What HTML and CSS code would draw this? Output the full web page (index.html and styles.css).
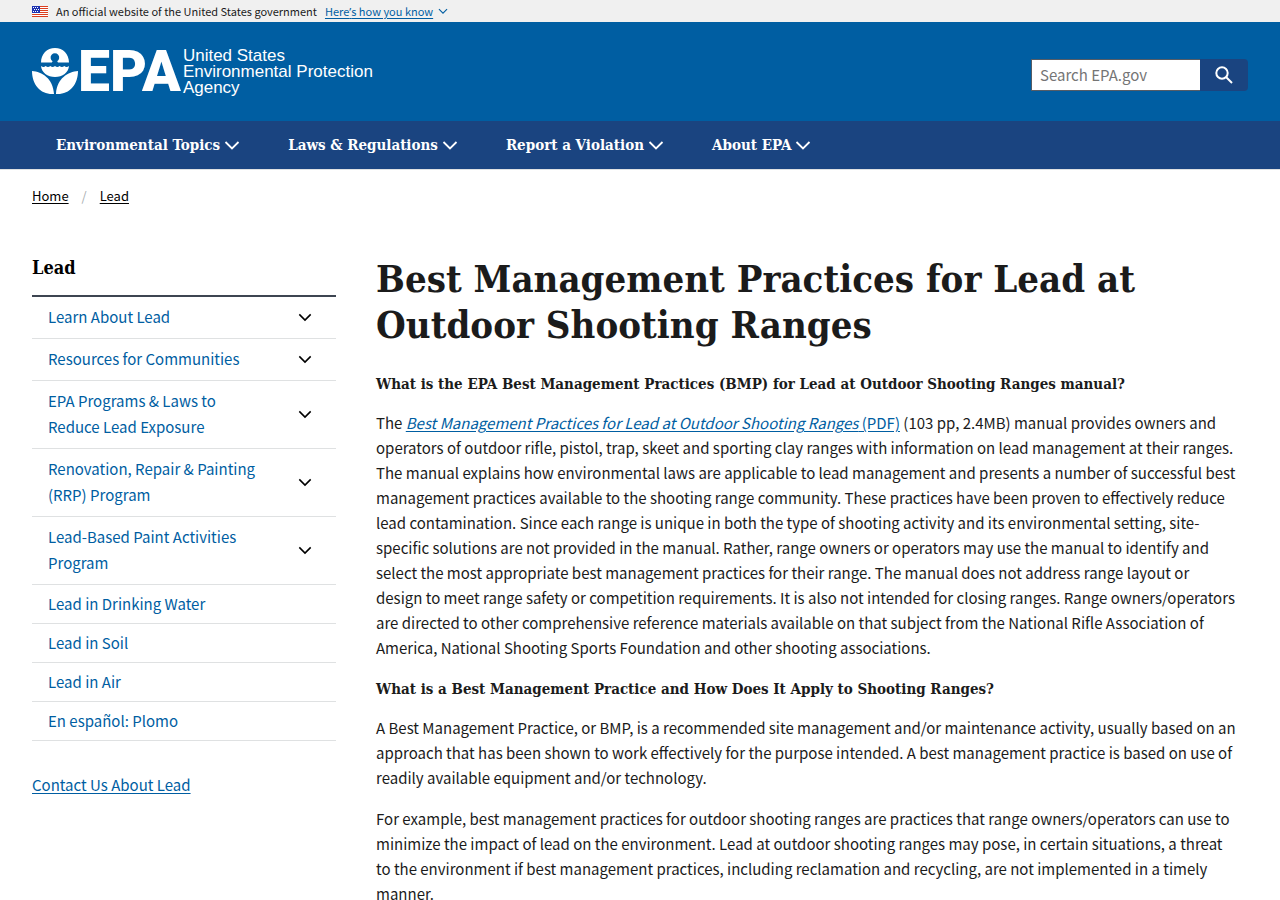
FILE: index.html
```html
<!DOCTYPE html>
<html lang="en">
<head>
<meta charset="utf-8">
<meta name="viewport" content="width=device-width, initial-scale=1">
<title>Best Management Practices for Lead at Outdoor Shooting Ranges | US EPA</title>
<link rel="stylesheet" href="styles.css">
</head>
<body>
<svg class="sprite" aria-hidden="true">
  <symbol id="chevron" viewBox="0 0 16 16"><path d="M1.500 5L8 11.500 14.500 5" fill="none" stroke="currentColor" stroke-width="1.800"/></symbol>
</svg>

<section class="banner" aria-label="Official government website">
  <svg class="flag" viewBox="0 0 16 11" aria-hidden="true">
    <path fill="#fff" d="M0 0h16v11H0z"/>
    <path stroke="#db3e1f" d="M0 .5h16M0 2.5h16M0 4.5h16M0 6.5h16M0 8.5h16M0 10.5h16"/>
    <path fill="#1e33b1" d="M0 0h8v7H0z"/>
    <path stroke="#fff" stroke-dasharray="1 1" d="M1 1.5h6M2 3.5h5M1 5.5h6"/>
  </svg>
  <span>An official website of the United States government</span>
  <button class="banner-button" type="button"><span class="banner-link">Here<span class="apostrophe">’</span>s how you know</span><svg class="icon-small" aria-hidden="true"><use href="#chevron"/></svg></button>
</section>

<header>
  <div class="masthead">
    <a class="logo" href="#" aria-label="United States Environmental Protection Agency">
      <svg class="flower" viewBox="0 0 46 47" aria-hidden="true">
        <path fill="#fff" fill-rule="evenodd" d="M9 14.5C9 6 15 0 23 0s14 6 14 14.5H26l-.8-1.2a4.3 4.3 0 1 0-4.6 0l-.8 1.2z"/>
        <path fill="#fff" d="M9 18q2.500 2 4.700 0 2.300 2 4.600 0 2.300 2 4.700 0 2.300 2 4.600 0 2.300 2 4.700 0 2.300 2 4.700 0C36.500 24.500 30.500 29 23 29S9.500 24.500 9 18z"/>
        <path fill="#fff" d="M0 23c10 1 21 7 22 23C9 47 0 37 0 23zM46 23c-10 1-21 7-22 23 13 1 22-9 22-23z"/>
      </svg>
      <span class="logo-mark">EPA</span>
      <span class="logo-name">United States<br>Environmental Protection<br>Agency</span>
    </a>
    <form class="search" role="search">
      <input class="search-input" type="search" aria-label="Search EPA.gov" placeholder="Search EPA.gov">
      <button class="search-button" type="submit" aria-label="Search">
        <svg class="search-icon" viewBox="0 0 18 18" aria-hidden="true"><circle cx="7" cy="7" r="5.700"/><path d="M11 11l6 6"/></svg>
      </button>
    </form>
  </div>
  <nav class="main-nav" aria-label="Primary">
    <button type="button">Environmental Topics<svg class="icon" aria-hidden="true"><use href="#chevron"/></svg></button>
    <button type="button">Laws &amp; Regulations<svg class="icon" aria-hidden="true"><use href="#chevron"/></svg></button>
    <button type="button">Report a Violation<svg class="icon" aria-hidden="true"><use href="#chevron"/></svg></button>
    <button type="button">About EPA<svg class="icon" aria-hidden="true"><use href="#chevron"/></svg></button>
  </nav>
</header>

<nav aria-label="Breadcrumb">
  <ol class="breadcrumb">
    <li><a href="#">Home</a></li>
    <li><a href="#">Lead</a></li>
  </ol>
</nav>

<div class="page">
  <aside class="sidebar">
    <h2>Lead</h2>
    <ul class="side-menu">
      <li class="expandable"><a href="#">Learn About Lead</a><button type="button" aria-label="Expand Learn About Lead"><svg class="icon" aria-hidden="true"><use href="#chevron"/></svg></button></li>
      <li class="expandable"><a href="#">Resources for Communities</a><button type="button" aria-label="Expand Resources for Communities"><svg class="icon" aria-hidden="true"><use href="#chevron"/></svg></button></li>
      <li class="expandable"><a href="#">EPA Programs &amp; Laws to Reduce Lead Exposure</a><button type="button" aria-label="Expand EPA Programs and Laws"><svg class="icon" aria-hidden="true"><use href="#chevron"/></svg></button></li>
      <li class="expandable"><a href="#">Renovation, Repair &amp; Painting (RRP) Program</a><button type="button" aria-label="Expand Renovation, Repair and Painting"><svg class="icon" aria-hidden="true"><use href="#chevron"/></svg></button></li>
      <li class="expandable"><a href="#">Lead-Based Paint Activities Program</a><button type="button" aria-label="Expand Lead-Based Paint Activities"><svg class="icon" aria-hidden="true"><use href="#chevron"/></svg></button></li>
      <li><a href="#">Lead in Drinking Water</a></li>
      <li><a href="#">Lead in Soil</a></li>
      <li><a href="#">Lead in Air</a></li>
      <li><a href="#" lang="es">En español: Plomo</a></li>
    </ul>
    <a class="contact" href="#">Contact Us About Lead</a>
  </aside>

  <main>
    <h1>Best Management Practices for Lead at Outdoor Shooting Ranges</h1>
    <h3>What is the EPA Best Management Practices (BMP) for Lead at Outdoor Shooting Ranges manual?</h3>
    <p>The <a href="#"><em>Best Management Practices for Lead at Outdoor Shooting Ranges</em> (PDF)</a> (103 pp, 2.4MB) manual provides owners and operators of outdoor rifle, pistol, trap, skeet and sporting clay ranges with information on lead management at their ranges. The manual explains how environmental laws are applicable to lead management and presents a number of successful best management practices available to the shooting range community. These practices have been proven to effectively reduce lead contamination. Since each range is unique in both the type of shooting activity and its environmental setting, site-specific solutions are not provided in the manual. Rather, range owners or operators may use the manual to identify and select the most appropriate best management practices for their range. The manual does not address range layout or design to meet range safety or competition requirements. It is also not intended for closing ranges. Range owners/operators are directed to other comprehensive reference materials available on that subject from the National Rifle Association of America, National Shooting Sports Foundation and other shooting associations.</p>
    <h3>What is a Best Management Practice and How Does It Apply to Shooting Ranges?</h3>
    <p>A Best Management Practice, or BMP, is a recommended site management and/or maintenance activity, usually based on an approach that has been shown to work effectively for the purpose intended. A best management practice is based on use of readily available equipment and/or technology.</p>
    <p>For example, best management practices for outdoor shooting ranges are practices that range owners/operators can use to minimize the impact of lead on the environment. Lead at outdoor shooting ranges may pose, in certain situations, a threat to the environment if best management practices, including reclamation and recycling, are not implemented in a timely manner.</p>
  </main>
</div>
</body>
</html>
```
FILE: styles.css
```css
:root {
  --sans: "Noto Sans CJK SC", "Noto Sans", sans-serif;
  --serif: "DejaVu Serif Condensed", "DejaVu Serif", serif;
  --blue: #005ea2;
  --navy: #1a4480;
  --ink: #1b1b1b;
}

* { box-sizing: border-box; }

body {
  margin: 0;
  background: #fff;
  color: var(--ink);
  font: 15px/25px var(--sans);
}

button {
  padding: 0;
  border: 0;
  background: none;
  color: inherit;
  font: inherit;
  cursor: pointer;
}

a { color: var(--blue); text-underline-offset: 2px; }
ul, ol { margin: 0; padding: 0; list-style: none; }
.sprite { position: absolute; width: 0; height: 0; }
.icon { width: 16px; height: 16px; flex: none; }

.banner {
  display: flex;
  align-items: center;
  gap: 8px;
  height: 22px;
  padding: 0 32px;
  background: #f0f0f0;
  font-size: 11px;
  line-height: 22px;
}
.flag { width: 16px; height: 11px; }
.banner-button { display: flex; align-items: center; gap: 5px; color: var(--blue); }
.banner-link { text-decoration: underline; text-underline-offset: 2px; }
.apostrophe { font-family: "Noto Sans", sans-serif; }
.icon-small { width: 10px; height: 10px; }

.masthead {
  display: flex;
  align-items: center;
  justify-content: space-between;
  padding: 24px 32px;
  background: var(--blue);
}
.logo { display: flex; align-items: center; color: #fff; text-decoration: none; }
.flower { width: 46px; height: 47px; }
.logo-mark { margin-right: 2px; font: 900 57px/51px Roboto, sans-serif; }
.logo-name { font: 17px/16px "Liberation Sans", sans-serif; }

.search { display: flex; height: 32px; margin-top: 6px; }
.search-input {
  width: 169px;
  padding: 0 8px;
  border: 1px solid #565c65;
  border-right: 0;
  border-radius: 0;
  background: #fff;
  color: var(--ink);
  font: 15px/20px var(--sans);
}
.search-input::placeholder { color: #757575; }
.search-button {
  display: grid;
  place-items: center;
  width: 48px;
  border-radius: 0 4px 4px 0;
  background: var(--navy);
}
.search-icon { width: 18px; height: 18px; fill: none; stroke: #fff; stroke-width: 2; }

.main-nav {
  display: flex;
  gap: 48px;
  padding: 0 56px;
  border-bottom: 1px solid #dfe1e2;
  background: var(--navy);
  color: #fff;
  font: bold 15px/48px var(--serif);
}
.main-nav button { display: flex; align-items: center; gap: 4px; }

.breadcrumb { display: flex; padding: 15px 32px 17px; font-size: 13px; line-height: 22px; }
.breadcrumb a { color: #000; }
.breadcrumb li + li::before { content: "/"; padding: 0 13px; color: #a9aeb1; }

.page {
  display: grid;
  grid-template-columns: 304px minmax(0, 1fr);
  gap: 40px;
  padding: 32px;
}

.sidebar { line-height: 26px; }
.sidebar h2 { margin: 0 0 15px; color: #000; font: bold 18px/24px var(--serif); }
.side-menu { margin-bottom: 31px; border-top: 2px solid #3d4551; }
.side-menu li { display: flex; padding: 6px 16px; border-bottom: 1px solid #dfe1e2; }
.side-menu a { flex: 1; text-decoration: none; }
.side-menu .expandable { padding: 7px 24px 8px 16px; gap: 32px; }
.side-menu button { display: grid; place-items: center; color: #000; }
.side-menu .icon { width: 14px; height: 14px; }

main { padding-right: 11px; }
h1 { margin: 0 0 26px; font: bold 38px/46px var(--serif); }
h3 { margin: 19px 0 16px; font: bold 15px/20px var(--serif); }
p { margin: 0 0 16px; }
```
